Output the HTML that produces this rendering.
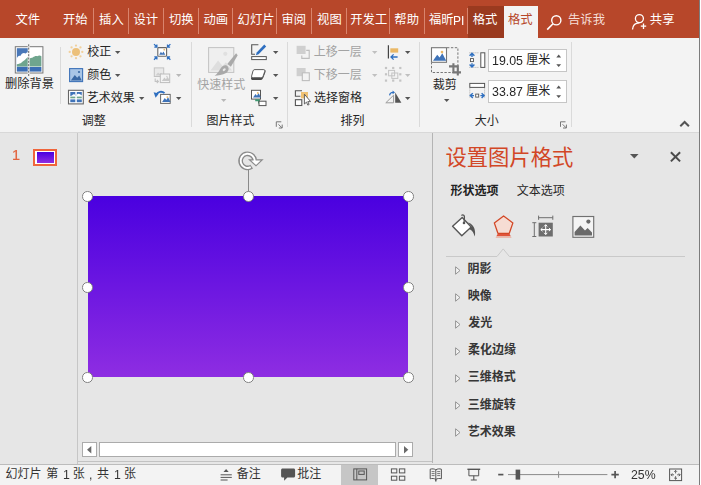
<!DOCTYPE html>
<html lang="zh-CN"><head><meta charset="utf-8"><title>PowerPoint</title>
<style>
*{box-sizing:border-box;margin:0;padding:0}
html,body{width:701px;height:485px;overflow:hidden;background:#fff}
body{font-family:"Liberation Sans","Noto Sans CJK SC",sans-serif;font-size:12px;color:#262626;position:relative}
#app{position:absolute;left:0;top:0;width:701px;height:485px;overflow:hidden;background:#e6e6e6}
.tx{position:absolute;display:block;white-space:nowrap;line-height:1;font-family:"Liberation Sans","Noto Sans CJK SC",sans-serif;font-weight:normal;transform:translateY(-.06em)}
.a{position:absolute;white-space:nowrap;display:block;will-change:transform}
.dd{position:absolute;width:0;height:0;display:block}
.abs{position:absolute;display:block}
.ico{position:absolute;display:block;overflow:visible}
#tabs{position:absolute;left:0;top:0;width:699px;height:38px;background:#b7472a}
.sep{position:absolute;top:8px;width:1px;height:26px;background:#d9846d}
#ribbon{position:absolute;left:0;top:38px;width:699px;height:95px;z-index:2;background:#f3f3f3;border-bottom:1px solid #d8d8d8}
.gsep{position:absolute;width:1px;background:#dadada}
#edge{position:absolute;left:699px;top:0;width:1px;height:485px;background:#7c7c7c}
#edge2{position:absolute;left:700px;top:0;width:1px;height:485px;background:#fff}
#thumbs{position:absolute;left:0;top:132px;width:77px;height:332px;background:#e6e6e6}
#vdiv1{position:absolute;left:77px;top:132px;width:1px;height:332px;background:#c6c6c6}
#editor{position:absolute;left:78px;top:132px;width:354px;height:330px;background:#e6e6e6}
#pane{position:absolute;left:432px;top:132px;width:267px;height:331px;background:#e6e6e6;border-left:1px solid #b4b4b4}
#status{position:absolute;left:0;top:464px;width:699px;height:21px;background:#f3f3f3;border-top:1px solid #bcbcbc}
.h{position:absolute;width:10.6px;height:10.6px;border-radius:50%;background:#fff;border:1.6px solid #828282}
.inp{position:absolute;background:#fff;border:1px solid #c6c6c6}
</style></head>
<body><div id="app">
<div id="tabs">
<span class="tx" style="left:15.52px;top:14.55px;font-size:12.3px;color:#ffffff">文件</span>
<span class="tx" style="left:62.9px;top:14.55px;font-size:12.3px;color:#ffffff">开始</span>
<span class="tx" style="left:99.12px;top:14.55px;font-size:12.3px;color:#ffffff">插入</span>
<span class="tx" style="left:133.41px;top:14.55px;font-size:12.3px;color:#ffffff">设计</span>
<span class="tx" style="left:168.9px;top:14.55px;font-size:12.3px;color:#ffffff">切换</span>
<span class="tx" style="left:203.57px;top:14.55px;font-size:12.3px;color:#ffffff">动画</span>
<span class="tx" style="left:237.62px;top:14.55px;font-size:12.3px;color:#ffffff">幻灯片</span>
<span class="tx" style="left:281.54px;top:14.55px;font-size:12.3px;color:#ffffff">审阅</span>
<span class="tx" style="left:317.08px;top:14.55px;font-size:12.3px;color:#ffffff">视图</span>
<span class="tx" style="left:350.3px;top:14.55px;font-size:12.3px;color:#ffffff">开发工</span>
<span class="tx" style="left:394.33px;top:14.55px;font-size:12.3px;color:#ffffff">帮助</span>
<span class="tx" style="left:429px;top:14.55px;font-size:12.3px;color:#ffffff">福昕</span>
<span class="a" style="left:453.3px;top:14px;font-size:12px;line-height:14px;color:#ffffff;font-weight:normal;">PI</span>
<i class="sep" style="left:93px"></i>
<i class="sep" style="left:128px"></i>
<i class="sep" style="left:163px"></i>
<i class="sep" style="left:198px"></i>
<i class="sep" style="left:232px"></i>
<i class="sep" style="left:276px"></i>
<i class="sep" style="left:311px"></i>
<i class="sep" style="left:346px"></i>
<i class="sep" style="left:389px"></i>
<i class="sep" style="left:424px"></i>
<i class="sep" style="left:467px"></i>
<div class="abs" style="left:468px;top:6px;width:36px;height:32px;background:#9a3a1f"></div>
<div class="abs" style="left:504px;top:6px;width:34px;height:32px;background:#f3f3f3"></div>
<span class="tx" style="left:472.69px;top:14.55px;font-size:12.3px;color:#ffffff">格式</span>
<span class="tx" style="left:507.89px;top:14.55px;font-size:12.3px;color:#b7472a">格式</span>
<svg class="ico" style="left:546px;top:14px" width="17" height="17" viewBox="0 0 17 17"><circle cx="10.3" cy="6.3" r="4.6" fill="none" stroke="#fff" stroke-width="1.4"/><path d="M7 9.8L1.2 15.6" stroke="#fff" stroke-width="1.6" fill="none"/></svg>
<span class="tx" style="left:568.06px;top:14.55px;font-size:12.3px;color:#f6dfd8">告诉我</span>
<svg class="ico" style="left:631px;top:13px" width="18" height="18" viewBox="0 0 18 18"><circle cx="8.4" cy="5.6" r="4" fill="none" stroke="#fff" stroke-width="1.3"/><path d="M1.5 16.5C1.8 12 4.5 9.8 8.4 9.8" fill="none" stroke="#fff" stroke-width="1.3"/><path d="M12.5 10.5V16M9.8 13.2H15.2" stroke="#fff" stroke-width="1.3"/></svg>
<span class="tx" style="left:649.83px;top:14.55px;font-size:12.3px;color:#ffffff">共享</span>
</div>
<div id="ribbon">
<span class="tx" style="left:4.96px;top:40.97px;font-size:12.25px;color:#262626">删除背景</span>
<i class="gsep" style="left:60px;top:9px;height:57px"></i>
<span class="tx" style="left:87.2px;top:8.8px;font-size:12px;color:#262626">校正</span>
<svg class="ico" style="left:115.2px;top:13.3px" width="5.4" height="3" viewBox="0 0 5.4 3"><path d="M0 0h5.4l-2.7 3z" fill="#555"/></svg>
<span class="tx" style="left:87.16px;top:31.8px;font-size:12px;color:#262626">颜色</span>
<svg class="ico" style="left:115.2px;top:36.3px" width="5.4" height="3" viewBox="0 0 5.4 3"><path d="M0 0h5.4l-2.7 3z" fill="#555"/></svg>
<span class="tx" style="left:86.85px;top:54.9px;font-size:12px;color:#262626">艺术效果</span>
<svg class="ico" style="left:139.2px;top:59.3px" width="5.4" height="3" viewBox="0 0 5.4 3"><path d="M0 0h5.4l-2.7 3z" fill="#555"/></svg>
<svg class="ico" style="left:175.8px;top:36.3px" width="5.4" height="3" viewBox="0 0 5.4 3"><path d="M0 0h5.4l-2.7 3z" fill="#b8b8b8"/></svg>
<svg class="ico" style="left:175.8px;top:59.1px" width="5.4" height="3" viewBox="0 0 5.4 3"><path d="M0 0h5.4l-2.7 3z" fill="#555"/></svg>
<span class="tx" style="left:81.72px;top:78.2px;font-size:12px;color:#262626">调整</span>
<i class="gsep" style="left:191px;top:4px;height:85px"></i>
<span class="tx" style="left:197.26px;top:41.8px;font-size:12px;color:#a3a3a3">快速样式</span>
<svg class="ico" style="left:220.6px;top:60.9px" width="5.4" height="3" viewBox="0 0 5.4 3"><path d="M0 0h5.4l-2.7 3z" fill="#b8b8b8"/></svg>
<svg class="ico" style="left:272.9px;top:12.9px" width="5.4" height="3" viewBox="0 0 5.4 3"><path d="M0 0h5.4l-2.7 3z" fill="#555"/></svg>
<svg class="ico" style="left:272.9px;top:36px" width="5.4" height="3" viewBox="0 0 5.4 3"><path d="M0 0h5.4l-2.7 3z" fill="#555"/></svg>
<svg class="ico" style="left:272.9px;top:59.1px" width="5.4" height="3" viewBox="0 0 5.4 3"><path d="M0 0h5.4l-2.7 3z" fill="#555"/></svg>
<span class="tx" style="left:206.45px;top:78.2px;font-size:12px;color:#262626">图片样式</span>
<i class="gsep" style="left:287px;top:4px;height:85px"></i>
<span class="tx" style="left:313.69px;top:8.7px;font-size:12px;color:#a3a3a3">上移一层</span>
<svg class="ico" style="left:372.2px;top:13.4px" width="5.4" height="3" viewBox="0 0 5.4 3"><path d="M0 0h5.4l-2.7 3z" fill="#c0c0c0"/></svg>
<span class="tx" style="left:313.64px;top:31.7px;font-size:12px;color:#a3a3a3">下移一层</span>
<svg class="ico" style="left:372.2px;top:36.4px" width="5.4" height="3" viewBox="0 0 5.4 3"><path d="M0 0h5.4l-2.7 3z" fill="#c0c0c0"/></svg>
<span class="tx" style="left:314.02px;top:54.9px;font-size:12px;color:#262626">选择窗格</span>
<svg class="ico" style="left:405px;top:13.3px" width="5.4" height="3" viewBox="0 0 5.4 3"><path d="M0 0h5.4l-2.7 3z" fill="#555"/></svg>
<svg class="ico" style="left:405px;top:36.3px" width="5.4" height="3" viewBox="0 0 5.4 3"><path d="M0 0h5.4l-2.7 3z" fill="#c0c0c0"/></svg>
<svg class="ico" style="left:405px;top:59.3px" width="5.4" height="3" viewBox="0 0 5.4 3"><path d="M0 0h5.4l-2.7 3z" fill="#555"/></svg>
<span class="tx" style="left:340.56px;top:78.2px;font-size:12px;color:#262626">排列</span>
<i class="gsep" style="left:419px;top:4px;height:85px"></i>
<span class="tx" style="left:432.68px;top:41.6px;font-size:12px;color:#262626">裁剪</span>
<svg class="ico" style="left:443.7px;top:61px" width="5.4" height="3" viewBox="0 0 5.4 3"><path d="M0 0h5.4l-2.7 3z" fill="#555"/></svg>
<div class="inp" style="left:488px;top:11px;width:79px;height:23px"></div>
<div class="inp" style="left:488px;top:42px;width:79px;height:23px"></div>
<span class="a" style="left:491.5px;top:15.7px;font-size:12.4px;line-height:15px;color:#262626;font-weight:normal;">19.05</span>
<span class="tx" style="left:526.14px;top:17px;font-size:12px;color:#262626">厘米</span>
<span class="a" style="left:491.5px;top:46.7px;font-size:12.4px;line-height:15px;color:#262626;font-weight:normal;">33.87</span>
<span class="tx" style="left:526.14px;top:48px;font-size:12px;color:#262626">厘米</span>
<span class="tx" style="left:474.72px;top:78.2px;font-size:12px;color:#262626">大小</span>
<i class="gsep" style="left:571px;top:4px;height:85px"></i>
<svg class="ico" style="left:0;top:0" width="699" height="93" viewBox="0 38 699 93"><rect x="15.3" y="46.7" width="27.6" height="26.3" fill="#fff" stroke="#777" stroke-width="1"/><rect x="16.8" y="48.2" width="11.6" height="18.4" fill="#4a78b8"/><path d="M16.8 58.6c.5-2.4 2.2-3.4 3.8-2.8.6-2.4 3.2-3.6 5.2-2.2.8-1.2 1.8-1.6 2.6-1.4v14.4H16.8z" fill="#fff"/><path d="M16.8 66.4v-2.2c2.2-.2 3.6-.6 4.8-1.6 1.4-1.6 3-2 4.2-3.6l2.6-2.4v9.8z" fill="#6fa58e"/><path d="M29 66.4v-7.6c1.4-.9 2.6-.6 3.8-1.2 1.6-1.4 3-1.8 4.4-1.4 1.6-1 3.2-.8 4.2 0v10.2z" fill="#6fa58e"/><rect x="16.8" y="67" width="24.6" height="4.6" fill="#3c6eb4"/><path d="M28.7 44.3v32" stroke="#f3f3f3" stroke-width="2"/><path d="M28.7 44.3v32" stroke="#666" stroke-width="1" stroke-dasharray="2 1.3"/><circle cx="76" cy="51.9" r="4" fill="#ecc07a"/><circle cx="82.30" cy="51.90" r="1.15" fill="#f1d09c"/><circle cx="80.45" cy="56.35" r="1.15" fill="#f1d09c"/><circle cx="76.00" cy="58.20" r="1.15" fill="#f1d09c"/><circle cx="71.55" cy="56.35" r="1.15" fill="#f1d09c"/><circle cx="69.70" cy="51.90" r="1.15" fill="#f1d09c"/><circle cx="71.55" cy="47.45" r="1.15" fill="#f1d09c"/><circle cx="76.00" cy="45.60" r="1.15" fill="#f1d09c"/><circle cx="80.45" cy="47.45" r="1.15" fill="#f1d09c"/><rect x="69.6" y="68.6" width="13" height="13" fill="#a9c5e6" stroke="#3f73b8" stroke-width="1.1"/><path d="M70.8 80.4l4-5.4 2.4 2.8 2-2.2 2.6 4.8z" fill="#3a68a4"/><circle cx="79" cy="72" r="1.1" fill="#3a68a4"/><rect x="68.5" y="90.3" width="14.8" height="13.6" fill="#fff" stroke="#666" stroke-width="1.1"/><rect x="70.3" y="92" width="5" height="4" fill="#3f73b8"/><rect x="76.8" y="92" width="5" height="4" fill="#3f73b8"/><path d="M72 95.5q1.5-2 3.3-.8v2h-5v-.700z" fill="#fff"/><path d="M76.8 96v-1.5q2-1.6 3.5 0l1.5.5v1z" fill="#fff"/><rect x="70.3" y="96.6" width="5" height="1.7" fill="#6fa58e"/><rect x="76.8" y="96.6" width="5" height="1.7" fill="#6fa58e"/><rect x="70.3" y="99.4" width="5" height="2.8" fill="#3f73b8"/><rect x="76.8" y="99.4" width="5" height="2.8" fill="#3f73b8"/><rect x="157.8" y="47.6" width="8.8" height="8.6" rx=".8" fill="#fff" stroke="#666" stroke-width="1.1"/><path d="M159.2 54.8l1.7-3 1.3 1.6 1.2-1.8 1.9 3.2z" fill="#3f73b8"/><circle cx="164.3" cy="49.7" r=".9" fill="#eab866"/><path d="M154 44.1l2.7 2.7M156.9 44.4v2.6h-2.6" stroke="#2e6fc0" stroke-width="1.25" fill="none"/><path d="M170.4 44.1l-2.7 2.7M167.5 44.4v2.6h2.6" stroke="#2e6fc0" stroke-width="1.25" fill="none"/><path d="M154 59.7l2.7 -2.7M156.9 59.400000000000006v-2.6h-2.6" stroke="#2e6fc0" stroke-width="1.25" fill="none"/><path d="M170.4 59.7l-2.7 -2.7M167.5 59.400000000000006v-2.6h2.6" stroke="#2e6fc0" stroke-width="1.25" fill="none"/><rect x="154.3" y="67.9" width="9.4" height="8.6" fill="#e9e9e9" stroke="#c2c2c2" stroke-width="1"/><path d="M155.5 75.5l2.6-3 1.6 1.6 1.4-1.4 2 2.8z" fill="#cfcfcf"/><rect x="160.3" y="74" width="9.4" height="8.6" fill="#f3f3f3" stroke="#bdbdbd" stroke-width="1"/><path d="M161.8 81.1l2.63 -3.61 1.50 1.72 1.69 -2.58 2.44 4.47z" fill="#c8c8c8"/><circle cx="166.88" cy="76.58" r="0.90" fill="#d4d4d4"/><path d="M155.2 78.5v3h3.2M156.8 79.9l1.6 1.6-1.6 1.6" stroke="#c2c2c2" stroke-width="1.1" fill="none"/><rect x="160.6" y="94.4" width="9.6" height="9" fill="#fff" stroke="#666" stroke-width="1"/><path d="M162.1 101.9l2.69 -3.78 1.54 1.80 1.73 -2.70 2.50 4.68z" fill="#3f73b8"/><circle cx="167.32" cy="97.10" r="0.90" fill="#eab866"/><path d="M164.5 93.2a5 5 0 0 0-8.2 1.7" stroke="#2e6fc0" stroke-width="1.9" fill="none"/><path d="M153.6 92.3l5.2 1.2-3.2 4.3z" fill="#2e6fc0"/><rect x="208.6" y="47.6" width="25.2" height="24.8" fill="#efefef" stroke="#c2c2c2" stroke-width="1"/><path d="M210.5 70.6l7.6-10 4.4 5.4 3.4-3.8 6.2 8.4z" fill="#dedede"/><circle cx="225.3" cy="53.8" r="2.1" fill="#e0e0e0"/><path d="M236.1 53.3l1.6 1.9-6.8 11.6-3.6-2.7z" fill="#a9a9a9"/><path d="M226.6 65.4l3.3 2.5" stroke="#e4e4e4" stroke-width="1.1"/><path d="M227 65.7c2.5 1.9 2.1 5.3-.9 7.3-3.5 2.2-8 2.4-11.5 2.8 2.9-2 4-4.2 5.6-6.8s4.4-4.5 6.8-3.3z" fill="#a9a9a9"/><ellipse cx="224.2" cy="69.7" rx="1.7" ry="1.1" transform="rotate(-40 224.2 69.7)" fill="#e9e9e9"/><path d="M258.4 44.7h-6.7v9.6h3.3" stroke="#555" stroke-width="1.1" fill="none"/><rect x="251.7" y="56.6" width="14.6" height="3" fill="#fff" stroke="#555" stroke-width="1"/><path d="M264.3 44.6l1.9 1.8-7.6 7.9-2.7.9.8-2.8z" fill="#2e6fc0"/><path d="M254.2 69.6h9.4c1.6 0 2.4 1.2 1.8 2.6l-2 5.2c-.6 1.6-1.8 2.6-3.4 2.6h-7c-1.6 0-2.4-1.2-1.8-2.6l1.4-5.4c.3-1.4 1-2.4 1.6-2.4z" fill="#4a4a4a"/><path d="M255 69.6h8.4c1.2 0 1.7.9 1.3 2l-1.5 4.3c-.4 1.1-1.3 1.8-2.5 1.8h-7.5c-1.2 0-1.8-.9-1.5-2l1.2-4.3c.3-1.1 1-1.8 2.1-1.8z" fill="#fff" stroke="#555" stroke-width=".900"/><rect x="251.5" y="90.3" width="9" height="8.8" fill="#fff" stroke="#555" stroke-width="1"/><path d="M253.0 97.6l2.52 -3.70 1.44 1.76 1.62 -2.64 2.34 4.58z" fill="#3f73b8"/><circle cx="257.80" cy="92.94" r="0.90" fill="#eab866"/><path d="M255.2 100.2h3.8v3.2" stroke="#3d9970" stroke-width="1.9" fill="none"/><path d="M254 100.2h4v-1.4l2.4 1.4" fill="none"/><rect x="259" y="101.2" width="7" height="4.4" fill="#fff" stroke="#555" stroke-width="1"/><path d="M306.2 50.4h3v8h-7.4v-3" stroke="#bdbdbd" stroke-width="1.1" fill="none"/><rect x="296.6" y="45.8" width="9" height="8.2" fill="#cfcfcf"/><rect x="296.6" y="68" width="9" height="8.2" fill="#cfcfcf"/><rect x="302.3" y="72.8" width="7" height="7.8" fill="#f3f3f3" stroke="#bdbdbd" stroke-width="1.1"/><path d="M302 90.7h-6.6v5.6h5" stroke="#555" stroke-width="1.1" fill="none"/><rect x="295.4" y="99.7" width="6.4" height="5.8" fill="#fff" stroke="#555" stroke-width="1.1"/><rect x="301" y="92" width="7" height="6.4" fill="#f0c274"/><path d="M304.4 94.2v9.8l2.1-1.9 1.3 3 1.3-.6-1.3-2.9h2.8z" fill="#fff" stroke="#555" stroke-width=".900" stroke-linejoin="round"/><path d="M388.4 45.2v13.4" stroke="#444" stroke-width="1.2"/><rect x="390.3" y="48.3" width="7.9" height="4.3" fill="#eab866"/><path d="M391 57h6.6M393.6 54.4l-2.6 2.6 2.6 2.6" stroke="#2e6fc0" stroke-width="1.3" fill="none"/><rect x="384.90" y="66.90" width="2.2" height="2.2" fill="#c4c4c4"/><rect x="392.10" y="66.90" width="2.2" height="2.2" fill="#c4c4c4"/><rect x="399.20" y="66.90" width="2.2" height="2.2" fill="#c4c4c4"/><rect x="384.90" y="73.20" width="2.2" height="2.2" fill="#c4c4c4"/><rect x="399.20" y="73.20" width="2.2" height="2.2" fill="#c4c4c4"/><rect x="384.90" y="79.50" width="2.2" height="2.2" fill="#c4c4c4"/><rect x="392.10" y="79.50" width="2.2" height="2.2" fill="#c4c4c4"/><rect x="399.20" y="79.50" width="2.2" height="2.2" fill="#c4c4c4"/><rect x="388.6" y="70.4" width="6" height="5.4" fill="none" stroke="#c4c4c4" stroke-width="1"/><rect x="391.8" y="73" width="6" height="5.4" fill="none" stroke="#c4c4c4" stroke-width="1"/><path d="M395.2 92.6v10.2h6.2z" fill="#555"/><path d="M393.6 95.2v7.6h-7.8z" fill="#f3f3f3" stroke="#9a9a9a" stroke-width="1"/><path d="M389.6 95.4c.2-2 1.6-3 3.6-3" stroke="#2e6fc0" stroke-width="1.2" fill="none"/><path d="M392.6 90.6l2.4 1.8-2.4 1.8z" fill="#2e6fc0"/><path d="M447 47.7h10.9v24.8h-26.4v-9.6" stroke="#777" stroke-width="1" fill="none" stroke-dasharray="2.4 1.5"/><rect x="431.5" y="47.7" width="15" height="14.6" fill="#fff" stroke="#777" stroke-width="1.1"/><path d="M433.0 60.800000000000004l4.20 -6.13 2.40 2.92 2.70 -4.38 3.90 7.59z" fill="#3f73b8"/><circle cx="442.00" cy="52.08" r="1.35" fill="#eab866"/><path d="M453.4 63.2v9.2h7.6M449 66.4h8.8v9" stroke="#777" stroke-width="2.1" fill="none"/><rect x="480.8" y="52.8" width="4" height="14.6" fill="#fff" stroke="#555" stroke-width="1"/><path d="M469.4 52.8h10M469.4 67.4h10" stroke="#999" stroke-width=".800" stroke-dasharray="1 1"/><path d="M472 53.4v3.6M469.6 55.8l2.4-2.5 2.4 2.5M472 66.8v-3.6M469.6 64.4l2.4 2.5 2.4-2.5" stroke="#2e6fc0" stroke-width="1.4" fill="none"/><rect x="470.5" y="58.6" width="3" height="3" fill="#fff" stroke="#555" stroke-width=".900"/><rect x="469.8" y="83.4" width="14.8" height="4" fill="#fff" stroke="#555" stroke-width="1"/><path d="M469.8 88.4v9M484.6 88.4v9" stroke="#999" stroke-width=".800" stroke-dasharray="1 1"/><path d="M470.4 95.6h3.6M472.8 93.2l-2.5 2.4 2.5 2.4M484 95.6h-3.6M481.6 93.2l2.5 2.4-2.5 2.4" stroke="#2e6fc0" stroke-width="1.4" fill="none"/><rect x="475.7" y="94.1" width="3" height="3" fill="#fff" stroke="#555" stroke-width=".900"/><path d="M556.3 57.4l2.4-2.8 2.4 2.8z" fill="#555"/><path d="M556.3 64.2l2.4 2.8 2.4-2.8z" fill="#555"/><path d="M556.3 88.4l2.4-2.8 2.4 2.8z" fill="#555"/><path d="M556.3 95.2l2.4 2.8 2.4-2.8z" fill="#555"/><path d="M281.3 121.8h-5v5" stroke="#777" stroke-width="1" fill="none"/><path d="M278.40000000000003 124.3l3.6 3.6M282.2 124.6v3.4h-3.4" stroke="#777" stroke-width="1" fill="none"/><path d="M565.5 121.8h-5v5" stroke="#777" stroke-width="1" fill="none"/><path d="M562.6 124.3l3.6 3.6M566.4 124.6v3.4h-3.4" stroke="#777" stroke-width="1" fill="none"/><path d="M680.3 126.3l4.3-4.3 4.3 4.3" stroke="#555" stroke-width="2" fill="none"/></svg>
</div>
<div id="thumbs">
<span class="a" style="left:12.4px;top:14.5px;font-size:14.5px;line-height:17px;color:#e2623c;font-weight:normal;-webkit-text-stroke:.2px #e2623c;">1</span>
<div class="abs" style="left:33px;top:17px;width:24px;height:17px;background:#f0653b"></div>
<div class="abs" style="left:35.4px;top:19.4px;width:19.2px;height:12.2px;background:#fff"></div>
<div class="abs" style="left:36.5px;top:20.4px;width:17px;height:10.2px;background:linear-gradient(#4a00e0,#8e2de2)"></div>
</div><i id="vdiv1"></i>
<div id="editor">
<div class="abs" style="left:10px;top:64px;width:320px;height:181px;background:linear-gradient(#4a00e0,#8e2de2)"></div>
<i class="abs" style="left:169.8px;top:38px;width:1.1px;height:22px;background:#8a8a8a"></i>
<i class="h" style="left:4.3px;top:59px"></i>
<i class="h" style="left:4.3px;top:150.1px"></i>
<i class="h" style="left:4.3px;top:240.1px"></i>
<i class="h" style="left:165.1px;top:59px"></i>
<i class="h" style="left:165.1px;top:240.1px"></i>
<i class="h" style="left:325.2px;top:59px"></i>
<i class="h" style="left:325.2px;top:150.1px"></i>
<i class="h" style="left:325.2px;top:240.1px"></i>
<svg class="ico" style="left:0;top:0" width="354" height="330" viewBox="78 132 354 330"><path d="M251.69 166.63A7.05 7.05 0 1 1 254.63 159.87" fill="none" stroke="#8a8a8a" stroke-width="4.7"/><path d="M248 159.2h15.7l-7.7 7.4z" fill="#8a8a8a"/><path d="M250.74 167.19A7.05 7.05 0 1 1 254.69 161.3" fill="none" stroke="#fff" stroke-width="2"/><path d="M251.1 160.4h9.6l-4.7 4.5z" fill="#fff"/></svg>
<div class="abs" style="left:4px;top:310px;width:15px;height:15px;background:#fff;border:1px solid #ababab"></div>
<div class="abs" style="left:21px;top:310px;width:297px;height:15px;background:#fff;border:1px solid #ababab"></div>
<div class="abs" style="left:320px;top:310px;width:15px;height:15px;background:#fff;border:1px solid #ababab"></div>
<svg class="ico" style="left:8.599999999999994px;top:313.9px" width="5" height="8" viewBox="0 0 5 8"><path d="M4.3 0L0 3.7l4.3 3.7z" fill="#6a6a6a"/></svg>
<svg class="ico" style="left:325.8px;top:313.9px" width="5" height="8" viewBox="0 0 5 8"><path d="M0 0l4.3 3.7L0 7.4z" fill="#6a6a6a"/></svg>
</div>
<i class="abs" style="left:78px;top:461px;width:354px;height:1px;background:#c2c2c2"></i>
<div id="pane">
<span class="tx" style="left:12.44px;top:17.35px;font-size:21.3px;color:#d24726">设置图片格式</span>
<svg class="ico" style="left:196.8px;top:22.4px" width="8.6" height="4.6" viewBox="0 0 8.6 4.6"><path d="M0 0h8.6l-4.3 4.6z" fill="#555"/></svg>
<svg class="ico" style="left:236.5px;top:19px" width="11" height="11" viewBox="0 0 11 11"><path d="M.9 1.2l9.2 9.2M10.1 1.2l-9.2 9.2" stroke="#4a4a4a" stroke-width="2" fill="none"/></svg>
<span class="tx" style="left:17.56px;top:54.2px;font-size:12px;color:#222;font-weight:bold">形状选项</span>
<span class="tx" style="left:83.63px;top:54.2px;font-size:12px;color:#262626">文本选项</span>
<svg class="ico" style="left:0;top:0" width="266" height="331" viewBox="433 132 266 331"><path d="M452.6 226.2l9.6-8.8 9 9.6-9.4 8.8z" fill="#fff" stroke="#555" stroke-width="1.4" stroke-linejoin="round"/><path d="M461.4 215.4c1.8-1.4 3.4.2 3 2.4l-.3 4.6" stroke="#555" stroke-width="1.3" fill="none"/><circle cx="464" cy="223" r="1.3" fill="#555"/><path d="M468.2 222.6c3.8 1.2 6.4 4.6 6.8 8.8.2 2 .1 3.6-.4 5.2-.6-3.4-2.2-6.2-5.4-7.6l2.4-2.4z" fill="#555"/><path d="M503.6 216l9.3 6.9-3.6 10.4h-11.4l-3.6-10.4z" fill="#f6dcd3" stroke="#d24726" stroke-width="1.3" stroke-linejoin="round"/><path d="M497.6 233.9h12l1.2 2.4h-14.4z" fill="#e0543a"/><path d="M496.2 236.6h14.8l.6 1.4h-16z" fill="#eaa795" opacity=".700"/><rect x="538.6" y="222.7" width="14.2" height="13.8" fill="#6e6e6e"/><path d="M545.7 224.8v9.6M540.9 229.6h9.6" stroke="#fff" stroke-width="1.1"/><path d="M544.1 226.4l1.6-1.7 1.6 1.7M544.1 232.8l1.6 1.7 1.6-1.7M542.5 228l-1.7 1.6 1.7 1.6M548.9 228l1.7 1.6-1.7 1.6" stroke="#fff" stroke-width="1" fill="none"/><path d="M538.6 217.7h14.2M538.6 215.6v4.2M552.8 215.6v4.2" stroke="#6e6e6e" stroke-width="1"/><path d="M534.3 222.7v13.8M532.3 222.7h4M532.3 236.5h4" stroke="#6e6e6e" stroke-width="1"/><rect x="572.9" y="216.5" width="20.8" height="20.8" fill="#f4f4f4" stroke="#707070" stroke-width="1.15"/><path d="M574.6 235.6v-3.6l5.8-6.6 4.6 5 2.6-2.4 4.4 4.4v3.2z" fill="#6a6a6a"/><circle cx="588.4" cy="221.6" r="2.1" fill="#6a6a6a"/><path d="M446 256.5h51l6.2-7.6 6.2 7.6h175.6" stroke="#c9c9c9" stroke-width="1" fill="none"/></svg>
<span class="tx" style="left:34.51px;top:132px;font-size:12px;color:#363636;font-weight:bold">阴影</span>
<svg class="ico" style="left:21.5px;top:133.5px" width="6" height="9" viewBox="0 0 6 9"><path d="M.6.8L5 4.5.6 8.2z" fill="#f3f3f3" stroke="#8a8a8a" stroke-width=".9"/></svg>
<span class="tx" style="left:34.63px;top:159.1px;font-size:12px;color:#363636;font-weight:bold">映像</span>
<svg class="ico" style="left:21.5px;top:160.6px" width="6" height="9" viewBox="0 0 6 9"><path d="M.6.8L5 4.5.6 8.2z" fill="#f3f3f3" stroke="#8a8a8a" stroke-width=".9"/></svg>
<span class="tx" style="left:35.17px;top:186.2px;font-size:12px;color:#363636;font-weight:bold">发光</span>
<svg class="ico" style="left:21.5px;top:187.7px" width="6" height="9" viewBox="0 0 6 9"><path d="M.6.8L5 4.5.6 8.2z" fill="#f3f3f3" stroke="#8a8a8a" stroke-width=".9"/></svg>
<span class="tx" style="left:35.06px;top:213.3px;font-size:12px;color:#363636;font-weight:bold">柔化边缘</span>
<svg class="ico" style="left:21.5px;top:214.8px" width="6" height="9" viewBox="0 0 6 9"><path d="M.6.8L5 4.5.6 8.2z" fill="#f3f3f3" stroke="#8a8a8a" stroke-width=".9"/></svg>
<span class="tx" style="left:34.64px;top:240.4px;font-size:12px;color:#363636;font-weight:bold">三维格式</span>
<svg class="ico" style="left:21.5px;top:241.9px" width="6" height="9" viewBox="0 0 6 9"><path d="M.6.8L5 4.5.6 8.2z" fill="#f3f3f3" stroke="#8a8a8a" stroke-width=".9"/></svg>
<span class="tx" style="left:34.64px;top:267.5px;font-size:12px;color:#363636;font-weight:bold">三维旋转</span>
<svg class="ico" style="left:21.5px;top:269px" width="6" height="9" viewBox="0 0 6 9"><path d="M.6.8L5 4.5.6 8.2z" fill="#f3f3f3" stroke="#8a8a8a" stroke-width=".9"/></svg>
<span class="tx" style="left:34.8px;top:294.6px;font-size:12px;color:#363636;font-weight:bold">艺术效果</span>
<svg class="ico" style="left:21.5px;top:296.1px" width="6" height="9" viewBox="0 0 6 9"><path d="M.6.8L5 4.5.6 8.2z" fill="#f3f3f3" stroke="#8a8a8a" stroke-width=".9"/></svg>
</div>
<div id="status">
<span class="tx" style="left:5.44px;top:4.3px;font-size:12px;color:#333">幻灯片</span>
<span class="tx" style="left:46.21px;top:4.3px;font-size:12px;color:#333">第</span>
<span class="a" style="left:62.5px;top:3.1px;font-size:12.3px;line-height:15px;color:#333;font-weight:normal;">1</span>
<span class="tx" style="left:72.75px;top:4.3px;font-size:12px;color:#333">张</span>
<span class="a" style="left:89.3px;top:3.1px;font-size:12.3px;line-height:15px;color:#333;font-weight:normal;">,</span>
<span class="tx" style="left:97.05px;top:4.3px;font-size:12px;color:#333">共</span>
<span class="a" style="left:114.2px;top:3.1px;font-size:12.3px;line-height:15px;color:#333;font-weight:normal;">1</span>
<span class="tx" style="left:123.95px;top:4.3px;font-size:12px;color:#333">张</span>
<span class="tx" style="left:236.7px;top:4.3px;font-size:12px;color:#333">备注</span>
<span class="tx" style="left:297.14px;top:4.3px;font-size:12px;color:#333">批注</span>
<div class="abs" style="left:341px;top:0;width:37px;height:21px;background:#c6c6c6"></div>
<span class="a" style="left:630.8px;top:3.1px;font-size:12.3px;line-height:15px;color:#333;font-weight:normal;">25%</span>
<svg class="ico" style="left:0;top:0" width="699" height="20" viewBox="0 465 699 20"><path d="M223.5 472l2.6-2.9 2.6 2.9z" fill="#555"/><path d="M220.6 474.8h11.2M220.6 477.4h11.2M220.6 480h7" stroke="#555" stroke-width="1"/><path d="M282.6 468.6h11c.9 0 1.5.6 1.5 1.5v5.8c0 .9-.6 1.5-1.5 1.5h-6.2l-3.3 3.4v-3.4h-1.5c-.9 0-1.5-.6-1.5-1.5v-5.8c0-.9.6-1.5 1.5-1.5z" fill="#555"/><rect x="353.8" y="468.9" width="12.8" height="11" fill="none" stroke="#555" stroke-width="1"/><path d="M356.8 468.9v11" stroke="#555" stroke-width="1"/><rect x="358.8" y="471" width="5.4" height="3.4" fill="none" stroke="#555" stroke-width="1"/><rect x="391.4" y="468.9" width="5.4" height="4" fill="none" stroke="#555" stroke-width="1"/><rect x="399.4" y="468.9" width="5.4" height="4" fill="none" stroke="#555" stroke-width="1"/><rect x="391.4" y="476.2" width="5.4" height="4" fill="none" stroke="#555" stroke-width="1"/><rect x="399.4" y="476.2" width="5.4" height="4" fill="none" stroke="#555" stroke-width="1"/><path d="M435.8 469.8v10.4M430.2 469.2c2-.6 4-.4 5.6.6 1.6-1 3.6-1.2 5.6-.6v9.6c-2-.6-4-.4-5.6.6-1.6-1-3.6-1.2-5.6-.6z" fill="none" stroke="#555" stroke-width="1"/><path d="M431.6 471.6h3M431.6 473.6h3M431.6 475.6h3M437.2 471.6h3M437.2 473.6h3M437.2 475.6h3" stroke="#555" stroke-width=".800"/><path d="M435.8 479.6v2" stroke="#555" stroke-width="1.4"/><path d="M467.4 469.3h12.8" stroke="#555" stroke-width="1.4"/><path d="M468.9 470v5.8h9.8v-5.8" fill="none" stroke="#555" stroke-width="1"/><path d="M473.8 475.8v4M470.8 480h6" stroke="#555" stroke-width="1.1"/><path d="M498.2 474.6h5.2" stroke="#555" stroke-width="1.7"/><path d="M508 474.6h99.4" stroke="#8a8a8a" stroke-width="1"/><path d="M558.6 471.4v6.4" stroke="#8a8a8a" stroke-width="1"/><rect x="515.6" y="469.6" width="4.6" height="10" fill="#555"/><path d="M611.4 474.6h7.4M615.1 470.9v7.4" stroke="#555" stroke-width="1.7"/><rect x="669.6" y="469" width="12" height="11.6" fill="none" stroke="#555" stroke-width="1"/><path d="M675.6 470.4v3M674.2 471.8l1.4-1.4 1.4 1.4M675.6 479.2v-3M674.2 477.8l1.4 1.4 1.4-1.4M671 474.8h3M672.4 473.4l-1.4 1.4 1.4 1.4M680.2 474.8h-3M678.8 473.4l1.4 1.4-1.4 1.4" stroke="#555" stroke-width=".900" fill="none"/></svg>
</div>
<i id="edge"></i><i id="edge2"></i>
</div></body></html>
